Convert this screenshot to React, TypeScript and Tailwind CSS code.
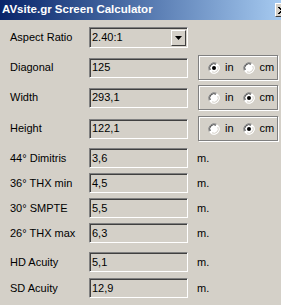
import React from 'react'

const font = { fontFamily: '"Liberation Sans", Arial, sans-serif' }

function Field({ value }: { value: string }) {
  return (
    <div className="w-[99px] h-[20px] bg-[#d4d0c8] border border-t-[#808080] border-l-[#808080] border-b-white border-r-white shadow-[inset_1px_1px_0_#404040] flex items-center pl-[2px] text-[11px] text-black">
      {value}
    </div>
  )
}

function Radio({ on }: { on: boolean }) {
  return (
    <svg width="12" height="12" viewBox="0 0 12 12" className="shrink-0">
      <circle cx="6" cy="6" r="5.5" fill="#ffffff" />
      <path d="M1.2 8.5 A5.5 5.5 0 0 1 8.5 1.2" fill="none" stroke="#808080" strokeWidth="1" />
      <path d="M2.2 8 A4.3 4.3 0 0 1 8 2.2" fill="none" stroke="#404040" strokeWidth="1" />
      <path d="M10.8 3.5 A5.5 5.5 0 0 1 3.5 10.8" fill="none" stroke="#ffffff" strokeWidth="1" />
      <path d="M9.8 4 A4.3 4.3 0 0 1 4 9.8" fill="none" stroke="#d4d0c8" strokeWidth="1" />
      {on && <circle cx="6" cy="6" r="2" fill="#000000" />}
    </svg>
  )
}

function Units({ inch }: { inch: boolean }) {
  return (
    <div className="ml-[10px] w-[80px] h-[25px] border border-[#808080] shadow-[inset_1px_1px_0_#ffffff,1px_1px_0_#ffffff] flex items-center pl-[9px] text-[11px] text-black">
      <Radio on={inch} />
      <span className="ml-[5px]">in</span>
      <span className="ml-[9px]"><Radio on={!inch} /></span>
      <span className="ml-[5px]">cm</span>
    </div>
  )
}

function Row({ label, children, mt, h }: { label: string; children: React.ReactNode; mt: string; h: string }) {
  return (
    <div className={`flex items-center pl-[10px] ${mt} ${h}`}>
      <div className="w-[79px] shrink-0 text-[11px] text-black">{label}</div>
      {children}
    </div>
  )
}

const distances = [
  { label: '44° Dimitris', value: '3,6', mt: 'mt-[7px]' },
  { label: '36° THX min', value: '4,5', mt: 'mt-[5px]' },
  { label: '30° SMPTE', value: '5,5', mt: 'mt-[5px]' },
  { label: '26° THX max', value: '6,3', mt: 'mt-[5px]' },
  { label: 'HD Acuity', value: '5,1', mt: 'mt-[9px]' },
  { label: 'SD Acuity', value: '12,9', mt: 'mt-[6px]' },
]

export default function App() {
  return (
    <div className="w-[281px] h-[305px] bg-[#d4d0c8] overflow-hidden" style={font}>
      {/* title bar */}
      <div className="h-[20px] flex items-center justify-between bg-gradient-to-r from-[#0a246a] to-[#a6caf0]">
        <span className="pl-[2px] text-[11.5px] font-bold text-white">AVsite.gr Screen Calculator</span>
        <div className="w-[16px] h-[14px] mr-[-10px] shrink-0 bg-[#d4d0c8] border border-t-white border-l-white border-b-[#404040] border-r-[#404040] flex items-center pl-[2px]">
          <svg width="8" height="7" viewBox="0 0 8 7">
            <path d="M0 0 L7 7 M1 0 L8 7 M7 0 L0 7 M8 0 L1 7" stroke="#000" strokeWidth="1" />
          </svg>
        </div>
      </div>

      <Row label="Aspect Ratio" mt="mt-[7px]" h="h-[21px]">
        <div className="w-[99px] h-[21px] bg-[#d4d0c8] border border-t-[#808080] border-l-[#808080] border-b-white border-r-white shadow-[inset_1px_1px_0_#404040] flex items-center justify-between pl-[2px] pr-[1px] text-[11px] text-black">
          <span>2.40:1</span>
          <div className="w-[15px] h-[16px] bg-[#d4d0c8] border border-t-white border-l-white border-b-[#404040] border-r-[#404040] flex items-center justify-center">
            <svg width="7" height="4" viewBox="0 0 7 4">
              <path d="M0 0 H7 L3.5 4 Z" fill="#000" />
            </svg>
          </div>
        </div>
      </Row>

      <Row label="Diagonal" mt="mt-[7px]" h="h-[25px]">
        <Field value="125" />
        <Units inch={true} />
      </Row>
      <Row label="Width" mt="mt-[5px]" h="h-[25px]">
        <Field value="293,1" />
        <Units inch={false} />
      </Row>
      <Row label="Height" mt="mt-[6px]" h="h-[25px]">
        <Field value="122,1" />
        <Units inch={false} />
      </Row>

      {distances.map((d) => (
        <Row key={d.label} label={d.label} mt={d.mt} h="h-[20px]">
          <Field value={d.value} />
          <span className="ml-[9px] text-[11px] text-black">m.</span>
        </Row>
      ))}
    </div>
  )
}
